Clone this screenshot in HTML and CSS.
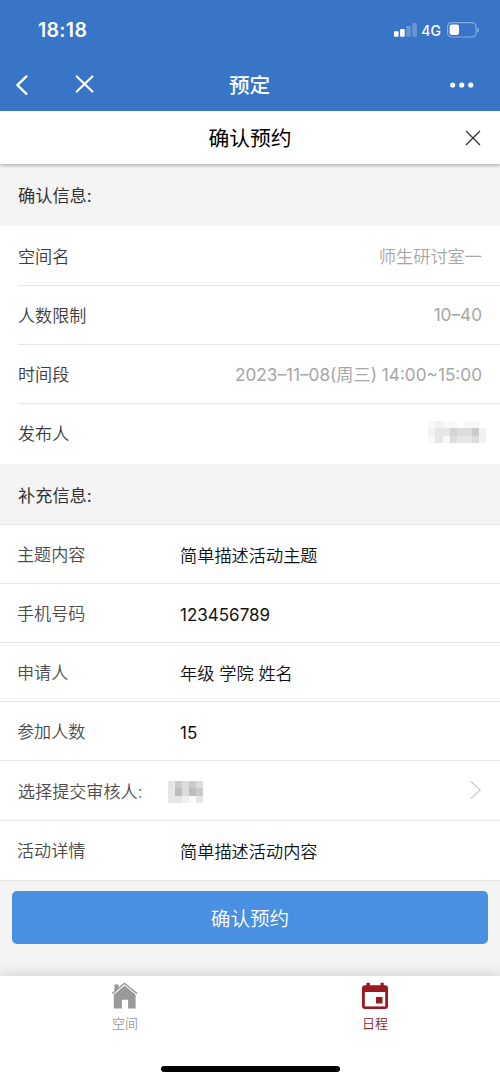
FILE: index.html
```html
<!DOCTYPE html>
<html lang="zh-CN">
<head>
<meta charset="utf-8">
<title>预定</title>
<link rel="stylesheet" href="styles.css">
</head>
<body>
<div class="screen">
  <header class="top">
    <div class="status">
      <span class="time">18:18</span>
      <div class="status-icons">
        <svg class="signal" width="24" height="15" viewBox="0 0 24 15" fill="#fff">
          <rect x="0" y="8.3" width="4.6" height="5.5" rx="1"/>
          <rect x="6.1" y="6" width="4.6" height="7.8" rx="1"/>
          <rect x="12.2" y="3" width="4.6" height="10.8" rx="1" opacity=".25"/>
          <rect x="18.3" y="0" width="4.6" height="13.8" rx="1" opacity=".25"/>
        </svg>
        <span class="net">4G</span>
        <svg class="battery" width="33" height="16" viewBox="0 0 33 16">
          <rect x=".6" y=".6" width="28.4" height="14.4" rx="4" fill="none" stroke="#fff" stroke-opacity=".4" stroke-width="1.2"/>
          <rect x="2.6" y="2.6" width="9.4" height="10.4" rx="2.2" fill="#fff"/>
          <path d="M30.4 5.4c2 .8 2 4 0 4.8z" fill="#fff" opacity=".5"/>
        </svg>
      </div>
    </div>
    <nav class="nav">
      <svg class="back" width="14" height="22" viewBox="0 0 14 22" fill="none" stroke="#fff" stroke-width="2.4" stroke-linecap="round" stroke-linejoin="round"><path d="M11.4 2.4 2.4 11.2l9 8.6"/></svg>
      <svg class="close" width="20" height="20" viewBox="0 0 20 20" fill="none" stroke="#fff" stroke-width="2.2" stroke-linecap="round"><path d="m1.8 2.5 15.6 15M17.4 2.5l-15.6 15"/></svg>
      <h1 class="nav-title">预定</h1>
      <svg class="more" width="26" height="6" viewBox="0 0 26 6" fill="#fff"><circle cx="3.7" cy="3" r="2.6"/><circle cx="12.7" cy="3" r="2.6"/><circle cx="21.8" cy="3" r="2.6"/></svg>
    </nav>
  </header>

  <div class="sheet-head">
    <h2 class="sheet-title">确认预约</h2>
    <svg class="sheet-close" width="16" height="16" viewBox="0 0 16 16" fill="none" stroke="#333" stroke-width="1.3"><path d="M1 1l14 14M15 1 1 15"/></svg>
  </div>

  <h3 class="section first">确认信息:</h3>
  <div class="info">
    <div class="info-row"><span>空间名</span><span class="value">师生研讨室一</span></div>
    <div class="info-row"><span>人数限制</span><span class="value latin">10–40</span></div>
    <div class="info-row"><span>时间段</span><span class="value latin">2023–11–08(周三) 14:00~15:00</span></div>
    <div class="info-row"><span>发布人</span>
      <svg class="mosaic-publisher" width="58" height="22" viewBox="0 0 8 3" preserveAspectRatio="none" shape-rendering="crispEdges">
        <path fill="#f8f8f8" d="M0 0h1v1H0zM2 0h2v1H2zM5 0h2v1H5zM0 2h1v1H0zM2 2h1v1H2z"/>
        <path fill="#f2f2f2" d="M1 0h1v1H1zM0 1h1v1H0zM7 1h1v2H7z"/>
        <path fill="#e7e7e7" d="M1 1h1v2H1zM2 1h1v1H2zM4 2h2v1H4z"/>
        <path fill="#d4d4d4" d="M3 1h1v1H3z"/>
        <path fill="#dcdcdc" d="M4 1h2v1H4zM3 2h1v1H3zM6 2h1v1H6z"/>
        <path fill="#cbcbcb" d="M6 1h1v1H6z"/>
      </svg>
    </div>
  </div>

  <h3 class="section second">补充信息:</h3>
  <div class="form">
    <div class="form-row"><span class="label">主题内容</span><span class="input">简单描述活动主题</span></div>
    <div class="form-row"><span class="label">手机号码</span><span class="input number">123456789</span></div>
    <div class="form-row"><span class="label">申请人</span><span class="input">年级 学院 姓名</span></div>
    <div class="form-row"><span class="label">参加人数</span><span class="input number">15</span></div>
    <div class="form-row picker"><span class="label wide">选择提交审核人:</span>
      <svg class="mosaic-reviewer" width="35" height="22" viewBox="0 0 5 3" preserveAspectRatio="none" shape-rendering="crispEdges">
        <path fill="#e6e6e6" d="M0 0h1v3H0zM1 2h1v1H1zM4 2h1v1H4z"/>
        <path fill="#cacaca" d="M1 0h1v1H1zM3 0h1v1H3zM4 1h1v1H4z"/>
        <path fill="#dcdcdc" d="M2 0h1v2H2zM4 0h1v1H4z"/>
        <path fill="#bdbdbd" d="M1 1h1v1H1zM3 1h1v1H3z"/>
        <path fill="#efefef" d="M2 2h1v1H2z"/>
        <path fill="#fafafa" d="M3 2h1v1H3z"/>
      </svg>
      <svg class="chevron" width="12" height="20" viewBox="0 0 12 20" fill="none" stroke="#ccc" stroke-width="1.3"><path d="M1 1.5 10.2 10 1 18.5"/></svg>
    </div>
    <div class="form-row"><span class="label">活动详情</span><span class="input">简单描述活动内容</span></div>
  </div>

  <div class="actions"><button class="submit">确认预约</button></div>

  <footer class="tabbar">
    <div class="tabs">
      <div class="tab">
        <svg width="28" height="28" viewBox="0 0 28 28" fill="#999"><path d="M3.4 2.4h4.2v4.4l-4.2 3.6z"/><path d="M2.8 12.4 13.6 3.6 24.6 12.4v14.2h-7.5v-8.8h-6.2v8.8H2.8z"/><path d="M1.2 11.7 13.6 1.4 26 11.7" fill="none" stroke="#999" stroke-width="1.5"/><path d="M1.9 12.8 13.6 3 25.3 12.8" fill="none" stroke="#fff" stroke-width=".8"/></svg>
        <span>空间</span>
      </div>
      <div class="tab active">
        <svg width="28" height="28" viewBox="0 0 28 28"><path d="M5.5.8h3.3v2.5h10.7V.8h3.3v2.5H24a3 3 0 0 1 3 3v17.8a3 3 0 0 1-3 3H4a3 3 0 0 1-3-3V6.3a3 3 0 0 1 3-3h1.5z" fill="#981b22"/><path d="M3.8 10h20.4v14.4H3.8z" fill="#fff"/><path d="M15 15h6.5v6.5H15z" fill="#981b22"/></svg>
        <span>日程</span>
      </div>
    </div>
    <div class="home-bar"></div>
  </footer>
</div>
</body>
</html>
```
FILE: styles.css
```css
* { box-sizing: border-box; }
body { margin: 0; font-family: Inter, "Noto Sans CJK SC", sans-serif; font-size: 17.1px; color: #3c3c3c; }
h1, h2, h3 { margin: 0; font-weight: 400; }
svg { display: block; flex: none; }
.screen { width: 500px; height: 1082px; display: flex; flex-direction: column; background: #f4f4f4; overflow: hidden; }
.screen > * { flex: none; }

.top { height: 111px; background: #3875c6; color: #fff; position: relative; z-index: 1; }
.status { height: 60px; padding: 0 20px 0 38px; display: flex; align-items: center; justify-content: space-between; }
.time { font-size: 19.5px; font-weight: 600; line-height: 24px; letter-spacing: .3px; }
.status-icons { display: flex; align-items: center; }
.net { margin: 1px 6px 0 4px; font-size: 14px; font-weight: 500; line-height: 16px; }
.signal { position: relative; left: 1px; }
.nav { height: 51px; display: grid; grid-template-columns: 75px 75px 199px 1fr; align-items: center; }
.back { margin: -2px 0 0 15px; }
.close { margin-top: -3px; }
.nav-title { text-align: center; font-size: 20.6px; font-weight: 500; line-height: 28px; }
.more { justify-self: end; margin: -1px 25px 0 0; }

.sheet-head { height: 53px; display: grid; grid-template-columns: 1fr 200px 1fr; align-items: center; background: #fff; box-shadow: 0 1px 4px rgba(0, 0, 0, .35); position: relative; }
.sheet-title { grid-column: 2; padding-top: 2px; text-align: center; font-size: 20.8px; line-height: 28px; color: #000; }
.sheet-close { justify-self: end; margin-right: 19px; }

.section { padding-left: 18px; display: flex; align-items: center; font-size: 17.2px; font-weight: 400; color: #333; }
.first { height: 62px; padding-bottom: 1px; }
.second { height: 60px; padding-top: 1px; }

.info { background: #fff; padding-left: 18px; font-weight: 350; }
.info-row { height: 59px; padding: 0 18px 1px 0; display: flex; align-items: center; justify-content: space-between; border-bottom: 1px solid #e5e5e5; }
.info-row:first-child { height: 60px; padding-bottom: 0; }
.info-row:last-child { height: 60px; border: 0; padding: 0 14px 3px 0; }
.value { color: #a6a6a6; font-size: 17.2px; }
.latin { font-weight: 400; }
.mosaic-publisher { margin-top: -2px; }

.form { background: #fff; border-top: 1px solid #e3e3e3; }
.form-row { height: 59px; padding: 0 18px 1px 17px; display: flex; align-items: center; border-bottom: 1px solid #e5e5e5; }
.form-row:nth-child(n+5) { height: 60px; }
.form-row:last-child { padding-bottom: 3px; }
.label { width: 163px; font-weight: 350; color: #4c4c4c; }
.wide { width: 150px; }
.form-row.picker { padding-left: 18px; padding-bottom: 0; }
.mosaic-reviewer { margin-top: 3px; }
.input { color: #111; font-size: 17.2px; font-weight: 350; padding-top: 2px; }
.number { font-size: 17px; font-weight: 400; padding-top: 4px; }
.chevron { margin: -2px 0 0 auto; }

.actions { height: 95px; padding: 10px 12px 0; }
.submit { display: block; width: 100%; height: 53px; padding: 0; border: 0; border-radius: 5px; background: #4a90e2; color: #fff; font: inherit; font-size: 19.6px; font-weight: 350; }

.tabbar { height: 106px; background: #fff; box-shadow: 0 0 14px rgba(0, 0, 0, .18); display: flex; flex-direction: column; align-items: center; }
.tabs { width: 100%; height: 90px; display: grid; grid-template-columns: 1fr 1fr; }
.tab { display: flex; flex-direction: column; align-items: center; padding: 6px 0 0; font-size: 13px; line-height: 18px; color: #999; gap: 4px; font-weight: 350; }
.active { color: #981b22; }
.tab svg { margin-right: 1px; }
.home-bar { width: 179px; height: 6px; border-radius: 3px; background: #000; }
```
